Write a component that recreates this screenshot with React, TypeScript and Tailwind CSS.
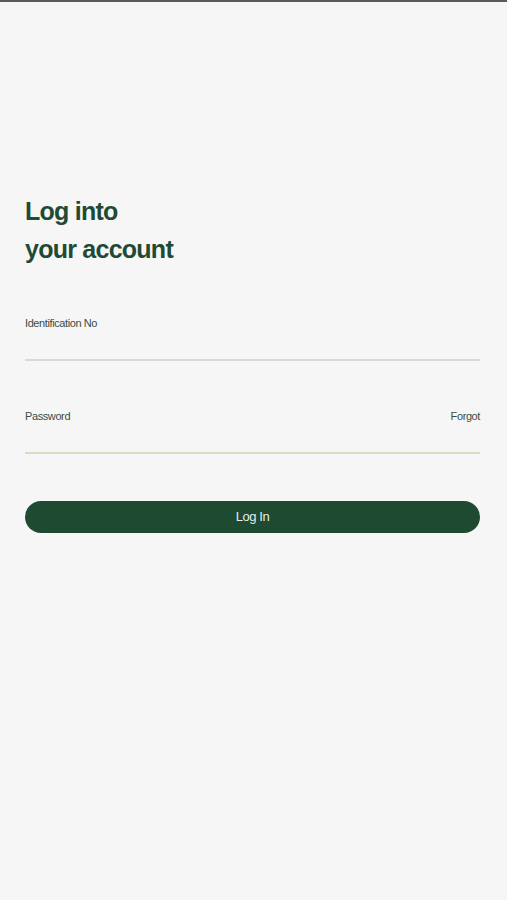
export default function App() {
  return (
    <div className="min-h-[900px] w-full bg-[#f6f6f6] border-t-2 border-[#5a5a5a] font-['Liberation_Sans',Arial,sans-serif]">
      <div className="pl-[25px] pr-[27px] pt-[190px]">
        <h1 className="text-[25px] leading-[38px] font-bold tracking-[-0.75px] text-[#1f4a33]">
          Log into
          <br />
          your account
        </h1>

        <div className="mt-[48px]">
          <label className="block text-[11px] leading-[14px] tracking-[-0.4px] text-[#3b4d43]">Identification No</label>
          <input className="block w-full h-[29px] bg-transparent outline-none border-b-2 border-[#d9d9d6] box-content" />
        </div>

        <div className="mt-[48px]">
          <div className="flex justify-between text-[11px] leading-[14px] tracking-[-0.4px] text-[#3b4d43]">
            <span>Password</span>
            <span>Forgot</span>
          </div>
          <input type="password" className="block w-full h-[29px] bg-transparent outline-none border-b-2 border-[#dcdcc4] box-content" />
        </div>

        <button className="mt-[47px] w-full h-[32px] rounded-full bg-[#1f4a32] text-[13px] tracking-[-0.4px] text-[#e8ece9]">
          Log In
        </button>
      </div>
    </div>
  )
}
